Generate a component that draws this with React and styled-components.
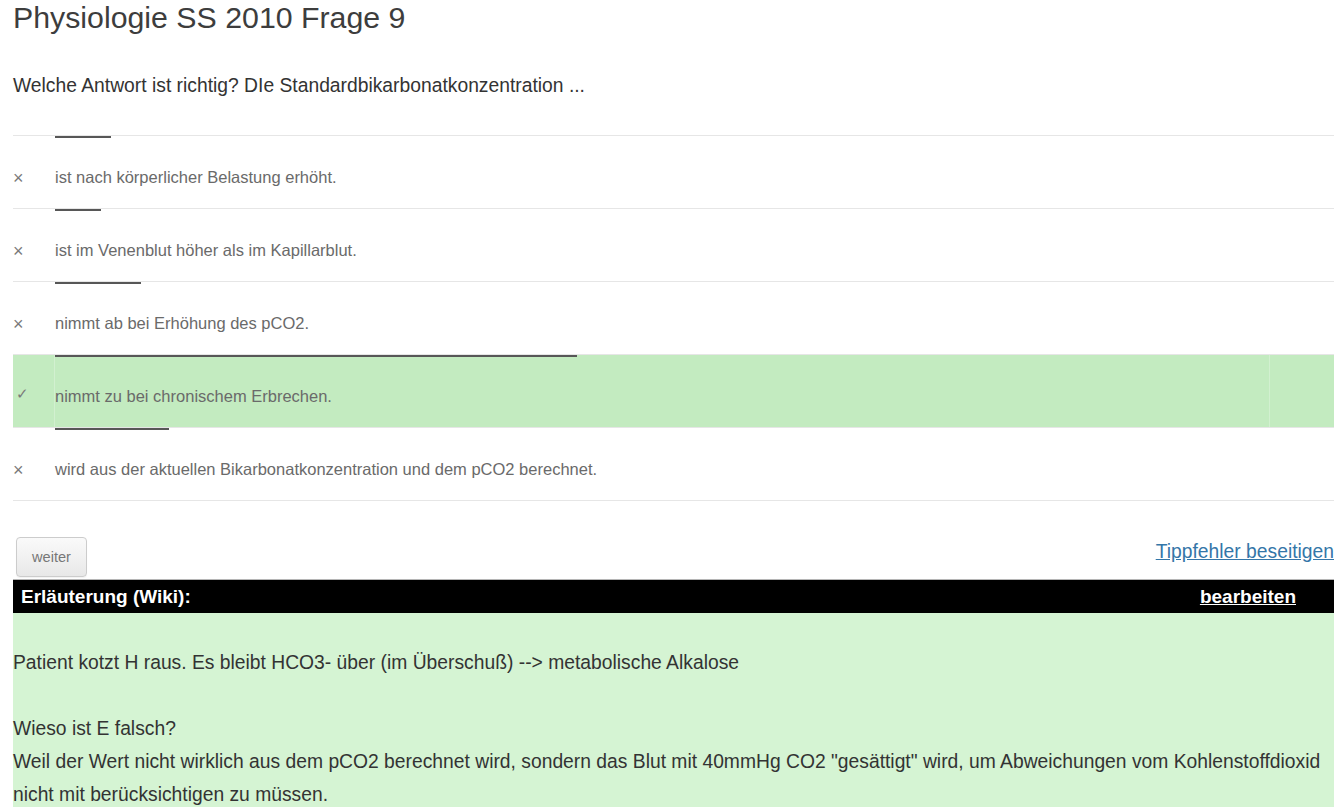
import React from "react";
import styled, { createGlobalStyle } from "styled-components";

const GlobalStyle = createGlobalStyle`
  html, body {
    margin: 0;
    padding: 0;
    background: #ffffff;
    overflow-x: hidden;
  }
  body {
    font-family: "Liberation Sans", Arial, Helvetica, sans-serif;
    color: #333333;
  }
`;

const Page = styled.main`
  padding-left: 13px;
  box-sizing: border-box;
  width: 100%;
`;

const Title = styled.h1`
  margin: 0;
  font-size: 30.3px;
  line-height: 36px;
  font-weight: normal;
  color: #3d3d3d;
`;

const Question = styled.p`
  margin: 39px 0 0;
  font-size: 19.3px;
  line-height: 22px;
  color: #333333;
`;

const AnswerList = styled.ul`
  list-style: none;
  margin: 38px 0 0;
  padding: 0;
  border-bottom: 1px solid #e6e6e6;
`;

const AnswerRow = styled.li`
  display: grid;
  grid-template-columns: 42px 1fr 65px;
  height: 72px;
  border-top: 1px solid #e6e6e6;
  background: ${(p) => (p.$correct ? "#c3ebc0" : "transparent")};
`;

const MarkerCell = styled.div`
  padding-top: ${(p) => (p.$correct ? "29px" : "32px")};
  padding-left: ${(p) => (p.$correct ? "3px" : "0")};
  font-size: ${(p) => (p.$correct ? "15px" : "18px")};
  line-height: 20px;
  color: #7a7a7a;
`;

const ContentCell = styled.div`
  border-left: 1px solid ${(p) => (p.$correct ? "rgba(255,255,255,0.25)" : "transparent")};
  margin-left: -1px;
`;

const EndCell = styled.div`
  border-left: 1px solid ${(p) => (p.$correct ? "rgba(255,255,255,0.25)" : "transparent")};
`;

const StatBar = styled.div`
  height: 2px;
  background: #575757;
`;

const AnswerText = styled.div`
  margin-top: 29px;
  font-size: 16.5px;
  line-height: 20px;
  color: #6a6a6a;
`;

const ActionBar = styled.div`
  display: flex;
  justify-content: space-between;
  align-items: flex-start;
  margin-top: 36px;
`;

const Button = styled.button`
  margin-left: 3px;
  height: 40px;
  padding: 0 15px;
  font-family: "Liberation Sans", Arial, sans-serif;
  font-size: 14.6px;
  color: #777777;
  background: linear-gradient(#fafafa, #e8e8e8);
  border: 1px solid #cccccc;
  border-radius: 4px;
  box-shadow: 0 1px 1px rgba(0, 0, 0, 0.05);
`;

const TypoLink = styled.a`
  margin-top: 4px;
  font-size: 19.3px;
  line-height: 22px;
  color: #3476a8;
  text-decoration: underline;
`;

const ExplanationHeader = styled.div`
  display: flex;
  justify-content: space-between;
  align-items: center;
  margin-top: 2px;
  height: 33px;
  border-top: 1px solid #b5b5b5;
  background: #000000;
  padding: 0 38px 0 8px;
  color: #ffffff;
  font-size: 19px;
  font-weight: bold;
`;

const EditLink = styled.a`
  color: #ffffff;
  text-decoration: underline;
`;

const ExplanationBody = styled.div`
  background: #d5f4d3;
  padding: 33px 0 40px;
  font-size: 19.3px;
  line-height: 33px;
  color: #333333;
`;

const answers = [
  { text: "ist nach körperlicher Belastung erhöht.", bar: 56 },
  { text: "ist im Venenblut höher als im Kapillarblut.", bar: 46 },
  { text: "nimmt ab bei Erhöhung des pCO2.", bar: 86 },
  { text: "nimmt zu bei chronischem Erbrechen.", bar: 522, correct: true },
  { text: "wird aus der aktuellen Bikarbonatkonzentration und dem pCO2 berechnet.", bar: 114 },
];

export default function App() {
  return (
    <>
      <GlobalStyle />
      <Page>
        <Title>Physiologie SS 2010 Frage 9</Title>
        <Question>Welche Antwort ist richtig? DIe Standardbikarbonatkonzentration ...</Question>
        <AnswerList>
          {answers.map((a) => (
            <AnswerRow key={a.text} $correct={a.correct}>
              <MarkerCell $correct={a.correct}>{a.correct ? "✓" : "×"}</MarkerCell>
              <ContentCell $correct={a.correct}>
                <StatBar style={{ width: a.bar }} />
                <AnswerText>{a.text}</AnswerText>
              </ContentCell>
              <EndCell $correct={a.correct} />
            </AnswerRow>
          ))}
        </AnswerList>
        <ActionBar>
          <Button type="button">weiter</Button>
          <TypoLink href="#">Tippfehler beseitigen</TypoLink>
        </ActionBar>
        <ExplanationHeader>
          <span>Erläuterung (Wiki):</span>
          <EditLink href="#">bearbeiten</EditLink>
        </ExplanationHeader>
        <ExplanationBody>
          Patient kotzt H raus. Es bleibt HCO3- über (im Überschuß) --&gt; metabolische Alkalose
          <br />
          <br />
          Wieso ist E falsch?
          <br />
          Weil der Wert nicht wirklich aus dem pCO2 berechnet wird, sondern das Blut mit 40mmHg CO2
          "gesättigt" wird, um Abweichungen vom Kohlenstoffdioxid nicht mit berücksichtigen zu müssen.
        </ExplanationBody>
      </Page>
    </>
  );
}
